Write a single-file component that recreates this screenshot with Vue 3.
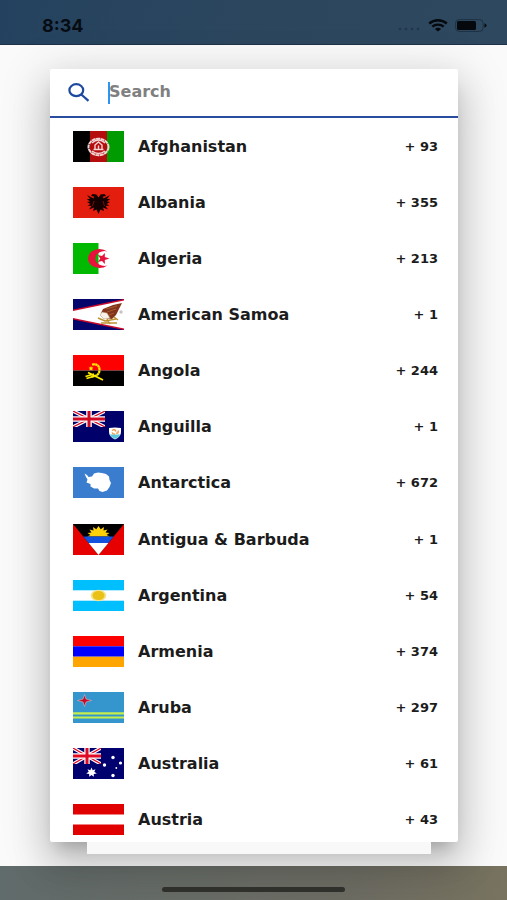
<script setup>
import { ref, computed } from 'vue'

// --- country data ---
const countries = [
  { iso: 'AF', name: 'Afghanistan', code: '93' },
  { iso: 'AL', name: 'Albania', code: '355' },
  { iso: 'DZ', name: 'Algeria', code: '213' },
  { iso: 'AS', name: 'American Samoa', code: '1' },
  { iso: 'AO', name: 'Angola', code: '244' },
  { iso: 'AI', name: 'Anguilla', code: '1' },
  { iso: 'AQ', name: 'Antarctica', code: '672' },
  { iso: 'AG', name: 'Antigua & Barbuda', code: '1' },
  { iso: 'AR', name: 'Argentina', code: '54' },
  { iso: 'AM', name: 'Armenia', code: '374' },
  { iso: 'AW', name: 'Aruba', code: '297' },
  { iso: 'AU', name: 'Australia', code: '61' },
  { iso: 'AT', name: 'Austria', code: '43' }
]

const query = ref('')
const selected = ref(null)

const filtered = computed(() => {
  const q = query.value.trim().toLowerCase()
  return countries.filter((c) => c.name.toLowerCase().includes(q))
})
</script>

<template>
  <div class="screen">
    <header class="status-bar">
      <span class="clock">8:34</span>
      <div class="status-icons">
        <svg class="signal" width="24" height="4" viewBox="0 0 24 4">
          <circle cx="3" cy="2" r="1.3" />
          <circle cx="9" cy="2" r="1.3" />
          <circle cx="15" cy="2" r="1.3" />
          <circle cx="21" cy="2" r="1.3" />
        </svg>
        <svg class="wifi" width="20" height="13" viewBox="0 0 20 13">
          <path d="M1.2 4.5C6.2 .2 13.8 .2 18.8 4.5M4.3 7.6C7.5 4.9 12.5 4.9 15.7 7.6" />
          <path class="wifi-dot" d="M6.9 9.9C8.7 8.4 11.3 8.4 13.1 9.9L10 12.6Z" />
        </svg>
        <svg class="battery" width="32" height="13" viewBox="0 0 32 13">
          <rect class="battery-case" x=".6" y=".6" width="27.5" height="11.8" rx="3.5" />
          <rect x="2" y="2" width="19" height="9" rx="1.5" />
          <path d="M29.5 4.2Q31.5 5 31.5 6.5T29.5 8.8Z" />
        </svg>
      </div>
    </header>

    <main class="backdrop">
      <section class="picker">
        <div class="search">
          <label class="search-label" for="country-search" aria-label="Search">
            <svg width="22" height="19" viewBox="0 0 22 19">
              <ellipse cx="8.3" cy="7.2" rx="6.9" ry="6" />
              <path d="M13.3 11.5L20.5 17.8" />
            </svg>
          </label>
          <span class="caret"></span>
          <input id="country-search" v-model="query" type="text" placeholder="Search" autocomplete="off" />
        </div>

        <ul class="list">
          <li v-for="c in filtered" :key="c.iso">
            <button class="row" type="button" @click="selected = c.iso">
              <svg class="flag" viewBox="0 0 51 31" preserveAspectRatio="none">
                <g v-if="c.iso === 'AF'">
                  <rect width="17" height="31" fill="#000" />
                  <rect x="17" width="17" height="31" fill="#b50d0d" />
                  <rect x="34" width="17" height="31" fill="#009b00" />
                  <g fill="none" stroke="#f3d5d5">
                    <ellipse cx="25.5" cy="16" rx="10" ry="8.3" stroke-width="2" stroke-dasharray="4 .5" />
                    <path d="M19 12Q25.5 6 32 12M19 20Q25.5 25 32 20" stroke-width="1.4" />
                    <path d="M20.5 18.5H30.5M22 18V14L25.5 11L29 14V18M25.5 14.5V18" stroke-width="1.4" />
                  </g>
                </g>

                <g v-else-if="c.iso === 'AL'">
                  <rect width="51" height="31" fill="#e41e0e" />
                  <path fill="#140000" d="M25.5 10.500L23.500 7.500L19.500 7L18 9L21 9.500L20.500 11.500L14 8L17 12L13.800 12L17 14.500L14 15L17.500 17L14.500 18.500L18.500 19L16 22.500L21 20.500L20 24L23.500 22.500L25.500 27L27.500 22.500L31 24L30 20.500L35 22.500L32.500 19L36.500 18.500L33.500 17L37 15L34 14.500L37.200 12L34 12L37 8L30.500 11.500L30 9.500L33 9L31.500 7L27.500 7.500Z" />
                  <path d="M21 14L19.500 19M30 14L31.500 19" stroke="#a3150a" stroke-width=".7" />
                </g>

                <g v-else-if="c.iso === 'DZ'">
                  <rect width="51" height="31" fill="#fff" />
                  <rect width="25.5" height="31" fill="#00b900" />
                  <path fill="#e8113c" d="M34.3 8.4A11.500 9.600 0 1 0 34.300 22.600A9.300 7.400 0 1 1 34.300 8.400Z" />
                  <path fill="#e8113c" d="M36.500 15.500L31.800 17L31.900 21L29 18L24.800 19L27.300 15.500L24.800 12L29 13L31.900 10L31.800 14Z" />
                </g>

                <g v-else-if="c.iso === 'AS'">
                  <rect width="51" height="31" fill="#05056b" />
                  <path fill="#c90a2a" d="M51 0L0 10.500V20.500L51 31Z" />
                  <path fill="#fff" d="M0 12L51 1.500V29.500L0 19Z" />
                  <path fill="#82351b" d="M30 10L40 6L49 4L46 10L43 16L39 20L32 19L28 14Z" />
                  <path d="M33 10L44 7M34 13L43 10M36 16L41 14" stroke="#b66b3d" stroke-width=".7" />
                  <path fill="#f7f3e9" stroke="#b18a61" stroke-width=".5" d="M29 13L34 14L37 19L31 20L27 16Z" />
                  <path d="M25 19L32 22L43 20M28 24H44M34 20L37 25M41 18L45 21" fill="none" stroke="#bd9230" stroke-width="1.4" />
                  <circle cx="48" cy="13" r="1.7" fill="#c8c2c8" />
                </g>

                <g v-else-if="c.iso === 'AO'">
                  <rect width="51" height="15.5" fill="#f00" />
                  <rect y="15.5" width="51" height="15.5" fill="#000" />
                  <path d="M19 9.500Q26 8.500 26.500 14.500Q26.500 21.500 18 21.500" fill="none" stroke="#ffec00" stroke-width="2.2" stroke-dasharray="2.5 .3" />
                  <path d="M12.500 21.500L21 19M15 17.500L30 25M13.500 23.500L20 21.500" stroke="#ffec00" stroke-width="1.8" />
                  <path fill="#ffec00" d="M18 11L18.700 12.500L20.400 12.600L19.200 13.800L19.500 15.500L18 14.700L16.500 15.500L16.800 13.800L15.600 12.600L17.300 12.500Z" />
                </g>

                <g v-else-if="c.iso === 'AI'">
                  <rect width="51" height="31" fill="#00006a" />
                  <svg width="32" height="16" viewBox="0 0 32 16" preserveAspectRatio="none">
                    <path d="M0 0L32 16M32 0L0 16" stroke="#fff" stroke-width="3.6" />
                    <path d="M0 0L32 16M32 0L0 16" stroke="#d10a24" stroke-width="1.2" />
                    <path d="M16 0V16M0 8H32" stroke="#fff" stroke-width="5.6" />
                    <path d="M16 0V16M0 8H32" stroke="#d10a24" stroke-width="3" />
                  </svg>
                  <path fill="#fff" d="M36 17Q42 16 48 17V21Q48 26 42 28.500Q36 26 36 21Z" />
                  <path fill="#5cc6dc" d="M36.500 23.500H47.500Q46 26.500 42 28Q38 26.500 36.500 23.500Z" />
                  <path d="M39 19.500Q42 17.500 43 20.500M45 19.500Q46 23 43 22M39 21.500Q40 23.500 42 23" fill="none" stroke="#ec963f" stroke-width="1.3" />
                </g>

                <g v-else-if="c.iso === 'AQ'">
                  <rect width="51" height="31" fill="#3a7dce" />
                  <path fill="#fff" d="M11.500 6.500L14 8L15.500 10L19 9.500L21 6.500L25 5.500L29 6L33 7L36 9.500L36.500 13L38 16L36.500 20L34 23.500L29.500 25L26.500 24L25 21.500L21 21.500L17.500 19.500L17.500 17L13.500 15.500L14.500 12.500L13 10Z" />
                </g>

                <g v-else-if="c.iso === 'AG'">
                  <rect width="51" height="31" fill="#e60000" />
                  <path fill="#000" d="M0 0H51L25.500 31Z" />
                  <path fill="#ffd10a" d="M14 12.500L17.500 11L14.500 9L18.500 8.500L16.500 5.500L20.500 6.500L20 3L23.300 5.200L25.500 2L27.700 5.200L31 3L30.500 6.500L34.500 5.500L32.500 8.500L36.500 9L33.500 11L37 12.500Z" />
                  <path fill="#1152df" d="M10.300 12.500H40.700L35.400 19H15.600Z" />
                  <path fill="#fff" d="M15.600 19H35.400L25.500 31Z" />
                </g>

                <g v-else-if="c.iso === 'AR'">
                  <rect width="51" height="31" fill="#00bfff" />
                  <rect y="10.3" width="51" height="10.4" fill="#fff" />
                  <ellipse cx="25.5" cy="15.5" rx="7.8" ry="5.8" fill="#f6e389" />
                  <ellipse cx="25.5" cy="15.5" rx="6" ry="4.600" fill="#e9c117" />
                </g>

                <g v-else-if="c.iso === 'AM'">
                  <rect width="51" height="10.3" fill="#f00" />
                  <rect y="10.3" width="51" height="10.4" fill="#00f" />
                  <rect y="20.7" width="51" height="10.3" fill="#ffa500" />
                </g>

                <g v-else-if="c.iso === 'AW'">
                  <rect width="51" height="31" fill="#3496cd" />
                  <path fill="#c40d25" stroke="#d3b9ca" stroke-width=".6" d="M11.500 2.500L13 7L18.500 8.500L13 10L11.500 14.500L10 10L4.500 8.500L10 7Z" />
                  <path d="M0 21.300H51M0 25.500H51" stroke="#c5ee4b" stroke-width="2.2" />
                </g>

                <g v-else-if="c.iso === 'AU'">
                  <rect width="51" height="31" fill="#00006f" />
                  <svg width="28" height="16" viewBox="0 0 28 16" preserveAspectRatio="none">
                    <path d="M0 0L28 16M28 0L0 16" stroke="#fff" stroke-width="3.6" />
                    <path d="M0 0L28 16M28 0L0 16" stroke="#e00a24" stroke-width="1.2" />
                    <path d="M14 0V16M0 8H28" stroke="#fff" stroke-width="5.4" />
                    <path d="M14 0V16M0 8H28" stroke="#e00a24" stroke-width="3" />
                  </svg>
                  <g fill="#fff">
                    <path d="M18.500 19.500L19.700 22.300L22.500 21.300L21.300 23.800L23.800 25.500L20.800 26L20.800 28.800L18.500 27L16.200 28.800L16.200 26L13.200 25.500L15.700 23.800L14.500 21.300L17.300 22.300Z" />
                    <circle cx="40" cy="9.5" r="1.7" />
                    <circle cx="47.5" cy="15" r="1.6" />
                    <circle cx="31.5" cy="17" r="1.7" />
                    <circle cx="43.3" cy="20" r=".9" />
                    <circle cx="40" cy="27.5" r="1.7" />
                  </g>
                </g>

                <g v-else>
                  <rect width="51" height="31" fill="#e00000" />
                  <rect y="10.5" width="51" height="10" fill="#fff" />
                </g>
              </svg>
              <span class="name">{{ c.name }}</span>
              <span class="code">+ {{ c.code }}</span>
            </button>
          </li>
        </ul>
      </section>
      <div class="under-card"></div>
    </main>

    <footer class="home-bar">
      <div class="home-indicator"></div>
    </footer>
  </div>
</template>

<style>
body {
  margin: 0;
  background: #fafafa;
}
</style>

<style scoped>
.screen {
  display: flex;
  flex-direction: column;
  min-height: 100vh;
  overflow: hidden;
  font-family: "DejaVu Sans", sans-serif;
  font-weight: 700;
  color: #1c1c1c;
}

/* --- status bar --- */
.status-bar {
  display: flex;
  align-items: center;
  justify-content: space-between;
  box-sizing: border-box;
  height: 45px;
  padding: 7px 20px 0 42px;
  background: linear-gradient(100deg, #24425f, #2c465e 50%, #2e485f);
  border-bottom: 1px solid #1f3147;
  color: #060c12;
}

.clock {
  font-family: Inter, sans-serif;
  font-size: 18px;
}

.status-icons {
  display: flex;
  align-items: center;
  gap: 7px;
}

.signal {
  margin-top: 7px;
  fill: #21364b;
}

.wifi {
  fill: none;
  stroke: #05090d;
  stroke-width: 2.4;
}

.wifi-dot {
  fill: #05090d;
  stroke: none;
}

.battery {
  fill: #05090d;
}

.battery-case {
  fill: none;
  stroke: #1d3142;
}

/* --- picker card --- */
.backdrop {
  flex: 1;
  display: flex;
  flex-direction: column;
  padding: 24px 49px 12px 50px;
  background: #fafafa;
}

.picker {
  flex: 1;
  display: flex;
  flex-direction: column;
  position: relative;
  z-index: 1;
  background: #fff;
  border-radius: 2px;
  box-shadow:
    0 11px 15px -7px rgba(0, 0, 0, 0.2),
    0 24px 38px 3px rgba(0, 0, 0, 0.14),
    0 9px 46px 8px rgba(0, 0, 0, 0.12);
}

.under-card {
  position: relative;
  z-index: 1;
  height: 12px;
  margin: 0 27px 0 37px;
  background: #f8f8f8;
}

.search {
  display: flex;
  align-items: center;
  height: 47px;
  padding: 0 18px;
  border-bottom: 2px solid #2a4c9f;
}

.search-label {
  display: flex;
  margin-right: 18px;
}

.search-label svg {
  fill: none;
  stroke: #1c489f;
  stroke-width: 2.2;
}

.caret {
  width: 2px;
  height: 22px;
  margin-right: -1px;
  background: #2b95f2;
}

.search input {
  flex: 1;
  min-width: 0;
  padding: 0 0 2px;
  border: 0;
  outline: 0;
  background: transparent;
  font: inherit;
  font-size: 16px;
  color: #1c1c1c;
}

.search input::placeholder {
  color: #808080;
  opacity: 1;
}

/* --- list --- */
.list {
  flex: 1;
  display: flex;
  flex-direction: column;
  justify-content: space-between;
  margin: 0;
  padding: 12px 0 6px;
  list-style: none;
}

.row {
  display: flex;
  align-items: center;
  width: 100%;
  height: 32px;
  padding: 0 20px 0 23px;
  border: 0;
  background: transparent;
  font: inherit;
  color: inherit;
  text-align: left;
  cursor: pointer;
}

.flag {
  flex: none;
  width: 51px;
  height: 31px;
  margin-right: 14px;
}

.name {
  flex: 1;
  font-size: 16px;
}

.code {
  font-size: 13px;
}

/* --- bottom bar --- */
.home-bar {
  display: flex;
  align-items: center;
  justify-content: center;
  height: 34px;
  background: linear-gradient(100deg, #606b6b, #686c66 40%, #6d6c63 70%, #78735f);
}

.home-indicator {
  width: 36%;
  height: 5px;
  margin-top: 12px;
  border-radius: 3px;
  background: #31312d;
}
</style>
